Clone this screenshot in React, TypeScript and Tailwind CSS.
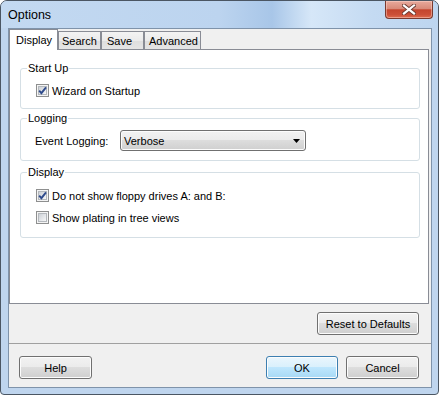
import * as React from 'react';

const btnGray =
  'border-[#707070] bg-[linear-gradient(180deg,#f2f2f2_0%,#ebebeb_49%,#dddddd_50%,#cfcfcf_100%)]';
const btnBlue =
  'border-[#3c7fb1] bg-[linear-gradient(180deg,#eaf6fd_0%,#d9f0fc_49%,#bee6fd_50%,#a7d9f5_100%)]';

/** Win7-style push button */
const Button: React.FC<{ label: string; className: string; primary?: boolean }> = ({
  label,
  className,
  primary,
}) => (
  <div
    className={`flex h-[23px] items-center justify-center rounded-[3px] border shadow-[inset_0_0_0_1px_#fcfcfc] ${
      primary ? btnBlue : btnGray
    } ${className}`}
  >
    {label}
  </div>
);

/** 13px checkbox with the blue tick */
const CheckBox: React.FC<{ checked?: boolean; label: string; className?: string }> = ({
  checked,
  label,
  className = '',
}) => (
  <div className={`flex h-[15px] items-center ${className}`}>
    <div className="ml-[15px] flex h-[13px] w-[13px] items-center justify-center border border-[#8e8f8f] bg-[#f4f4f4]">
      <div className="relative h-[9px] w-[9px] border border-[#b4b8bd] bg-[linear-gradient(135deg,#cdd1d6_0%,#e6e8eb_60%,#f7f7f7_100%)]">
        {checked && (
          <svg viewBox="0 0 9 9" className="absolute left-[-1px] top-[-1px] h-[9px] w-[9px] overflow-visible">
            <polyline
              points="1.2,4.6 3.4,7.2 8,1.4"
              fill="none"
              stroke="#2f4b8c"
              strokeWidth={1.9}
              strokeLinejoin="miter"
            />
          </svg>
        )}
      </div>
    </div>
    <span className="ml-[3px] whitespace-nowrap">{label}</span>
  </div>
);

/** Group box: border with a caption sitting on the top edge */
const GroupBox: React.FC<{ title: string; className: string; children: React.ReactNode }> = ({
  title,
  className,
  children,
}) => (
  <div className={`ml-[10px] w-[400px] rounded-[3px] border border-[#d5dfe5] ${className}`}>
    <div className="-mt-[8px] ml-[6px] w-fit bg-white px-px leading-[14px]">{title}</div>
    {children}
  </div>
);

const tabs = [
  { name: 'Search', cls: 'w-[43px] pl-[3px]' },
  { name: 'Save', cls: 'w-[43px] pl-[5px]' },
  { name: 'Advanced', cls: 'w-[57px] pl-[4px]' },
];

const CloseIcon: React.FC = () => (
  <svg width="14" height="11" viewBox="0 0 14 11">
    <g strokeLinecap="square">
      <line x1="2" y1="1.5" x2="12" y2="9.5" stroke="#6b3a30" strokeWidth={4} />
      <line x1="12" y1="1.5" x2="2" y2="9.5" stroke="#6b3a30" strokeWidth={4} />
      <line x1="2" y1="1.5" x2="12" y2="9.5" stroke="#ffffff" strokeWidth={2.2} />
      <line x1="12" y1="1.5" x2="2" y2="9.5" stroke="#ffffff" strokeWidth={2.2} />
    </g>
  </svg>
);

export default function App() {
  return (
    <div className="h-[395px] w-[439px] bg-white font-['Liberation_Sans',Arial,sans-serif] text-[11px] leading-[14px] text-black">
      <div className="flex h-[395px] w-[439px] flex-col overflow-hidden rounded-t-[7px] rounded-b-[4px] border border-[#4b5663] bg-[#bfd5ee]">
        {/* Title bar */}
        <div className="flex h-[27px] shrink-0 items-start justify-between bg-[linear-gradient(90deg,#c3d9f1_0%,#bcd4ef_50%,#a8c6e8_62%,#d6e7f8_71%,#c4daf2_85%,#bdd5ef_100%)]">
          <span className="pl-[7px] pt-[7px] text-[12.5px]">Options</span>
          <div className="mr-[5px] flex h-[18px] w-[48px] items-center justify-center rounded-b-[4px] border border-t-0 border-[#7a3a2f] bg-[linear-gradient(180deg,#e8aa9c_0%,#d88a79_45%,#c4452e_52%,#cc5038_80%,#df6c4f_100%)] shadow-[inset_0_0_0_1px_rgba(255,220,210,0.45)]">
            <CloseIcon />
          </div>
        </div>

        {/* Client area */}
        <div className="mb-[6px] ml-[7px] mr-[6px] flex h-[360px] flex-col border border-[#7f93aa] bg-[#f0f0f0]">
          {/* Tab strip */}
          <div className="flex h-[20px] items-end">
            <div className="relative z-10 -mb-px h-[21px] w-[49px] border border-b-0 border-[#898c95] bg-white pl-[6px] pt-[3px]">
              Display
            </div>
            {tabs.map((t) => (
              <div
                key={t.name}
                className={`h-[18px] border border-b-0 border-[#898c95] bg-[linear-gradient(180deg,#f3f3f3_0%,#ebebeb_50%,#dedede_51%,#e5e5e5_100%)] pt-[2px] ${t.cls}`}
              >
                {t.name}
              </div>
            ))}
          </div>

          {/* Tab panel */}
          <div className="h-[255px] w-[420px] border border-[#898c95] bg-white">
            <GroupBox title="Start Up" className="mt-[18px] h-[41px]">
              <CheckBox checked label="Wizard on Startup" className="mt-[8px]" />
            </GroupBox>

            <GroupBox title="Logging" className="mt-[9px] h-[43px]">
              <div className="mt-[5px] flex h-[21px] items-center">
                <span className="ml-[14px] w-[85px] whitespace-nowrap">Event Logging:</span>
                <div className={`flex h-[21px] w-[186px] items-center justify-between rounded-[3px] border pl-[3px] pr-[5px] shadow-[inset_0_0_0_1px_#fcfcfc] ${btnGray}`}>
                  <span>Verbose</span>
                  <svg width="7" height="4" viewBox="0 0 7 4">
                    <polygon points="0,0 7,0 3.5,4" fill="#000" />
                  </svg>
                </div>
              </div>
            </GroupBox>

            <GroupBox title="Display" className="mt-[11px] h-[66px]">
              <CheckBox checked label="Do not show floppy drives A: and B:" className="mt-[9px]" />
              <CheckBox label="Show plating in tree views" className="mt-[7px]" />
            </GroupBox>
          </div>

          {/* Reset row */}
          <div className="mt-[8px] flex justify-end pr-[12px]">
            <Button label="Reset to Defaults" className="w-[102px]" />
          </div>

          <div className="mt-[8px] h-px bg-[#a0a0a0]" />

          {/* Dialog buttons */}
          <div className="mt-[12px] flex items-center pl-[10px] pr-[12px]">
            <Button label="Help" className="w-[73px]" />
            <div className="flex-1" />
            <Button label="OK" primary className="w-[72px]" />
            <Button label="Cancel" className="ml-[8px] w-[73px]" />
          </div>
        </div>
      </div>
    </div>
  );
}
